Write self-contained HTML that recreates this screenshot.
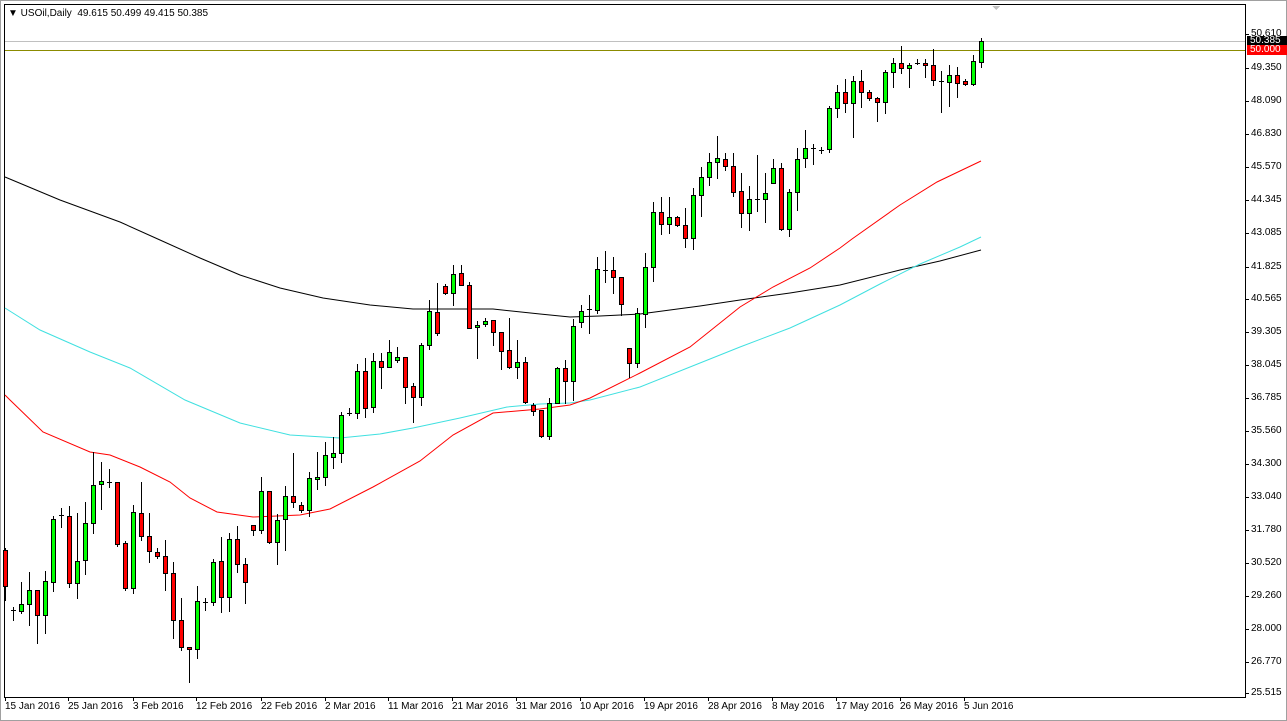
<!DOCTYPE html>
<html><head><meta charset="utf-8"><style>
html,body{margin:0;padding:0;background:#fff;}
body{width:1287px;height:721px;position:relative;overflow:hidden;font-family:"Liberation Sans",sans-serif;}
.lbl{position:absolute;font-size:10px;color:#000;white-space:nowrap;font-family:"Liberation Sans",sans-serif;}
.py{left:1251px}
.box{position:absolute;left:1247px;width:37px;height:10px;font-size:10px;line-height:10px;color:#fff;padding-left:3px;font-family:"Liberation Sans",sans-serif;}
</style></head><body>
<svg id="c" width="1287" height="721" style="position:absolute;left:0;top:0" shape-rendering="crispEdges">
<rect x="0.5" y="0.5" width="1286" height="720" fill="none" stroke="#a0a0a0"/>
<rect x="4.5" y="4.5" width="1241" height="693" fill="none" stroke="#000"/>
<line x1="5" y1="41.5" x2="1245" y2="41.5" stroke="#c0c0c0"/>
<line x1="5" y1="50.5" x2="1245" y2="50.5" stroke="#8b8b00"/>
<polygon points="992,6 1000,6 996,10" fill="#c0c0c0"/>
<g id="ma" fill="none" stroke-width="1" shape-rendering="auto">
<polyline stroke="#000" points="5,177 60,200 120,222 160,240 200,258 240,275 280,288 323,298 370,305 413,309 493,309 540,314 570,317 600,316 640,314 700,306 740,300 790,293 840,285 900,270 940,261 981,250"/>
<polyline stroke="#40e0e0" points="5,308 40,330 90,352 130,368 185,400 240,423 290,435 340,438 380,434 413,428 460,418 507,407 540,404 570,403 590,400 640,387 690,367 740,347 790,328 840,305 880,284 920,264 960,247 981,237"/>
<polyline stroke="#ff0000" points="5,395 10,400 43,432 90,452 110,455 140,467 170,482 190,498 217,512 253,517 300,515 330,509 373,487 420,461 453,435 493,413 540,409 570,405 590,398 640,373 690,347 740,307 773,287 810,268 840,248 852,239 900,205 937,182 960,171 981,161"/>
</g>
<g id="cd"></g>
<g id="tk" stroke="#000"></g>
</svg>
<div class="lbl" style="left:8px;top:8px;font-size:10px">&#9660; USOil,Daily&nbsp; 49.615 50.499 49.415 50.385</div>
<div class="lbl py" style="top:28px">50.610</div>
<div class="box" style="top:36px;background:#000">50.385</div>
<div class="box" style="top:45px;background:#ff0000">50.000</div>
<div class="lbl py" style="top:62px">49.350</div>
<div class="lbl py" style="top:95px">48.090</div>
<div class="lbl py" style="top:128px">46.830</div>
<div class="lbl py" style="top:161px">45.570</div>
<div class="lbl py" style="top:194px">44.345</div>
<div class="lbl py" style="top:227px">43.085</div>
<div class="lbl py" style="top:261px">41.825</div>
<div class="lbl py" style="top:293px">40.565</div>
<div class="lbl py" style="top:326px">39.305</div>
<div class="lbl py" style="top:359px">38.045</div>
<div class="lbl py" style="top:392px">36.785</div>
<div class="lbl py" style="top:425px">35.560</div>
<div class="lbl py" style="top:458px">34.300</div>
<div class="lbl py" style="top:491px">33.040</div>
<div class="lbl py" style="top:524px">31.780</div>
<div class="lbl py" style="top:557px">30.520</div>
<div class="lbl py" style="top:590px">29.260</div>
<div class="lbl py" style="top:623px">28.000</div>
<div class="lbl py" style="top:656px">26.770</div>
<div class="lbl py" style="top:687px">25.515</div>
<div class="lbl" style="left:5px;top:701px">15 Jan 2016</div>
<div class="lbl" style="left:68px;top:701px">25 Jan 2016</div>
<div class="lbl" style="left:133px;top:701px">3 Feb 2016</div>
<div class="lbl" style="left:196px;top:701px">12 Feb 2016</div>
<div class="lbl" style="left:261px;top:701px">22 Feb 2016</div>
<div class="lbl" style="left:325px;top:701px">2 Mar 2016</div>
<div class="lbl" style="left:388px;top:701px">11 Mar 2016</div>
<div class="lbl" style="left:452px;top:701px">21 Mar 2016</div>
<div class="lbl" style="left:516px;top:701px">31 Mar 2016</div>
<div class="lbl" style="left:580px;top:701px">10 Apr 2016</div>
<div class="lbl" style="left:644px;top:701px">19 Apr 2016</div>
<div class="lbl" style="left:708px;top:701px">28 Apr 2016</div>
<div class="lbl" style="left:772px;top:701px">8 May 2016</div>
<div class="lbl" style="left:836px;top:701px">17 May 2016</div>
<div class="lbl" style="left:900px;top:701px">26 May 2016</div>
<div class="lbl" style="left:964px;top:701px">5 Jun 2016</div>
<script>
var D=[
['r',550,586,548,600],['x',610,610,607,620],['g',604,611,582,613],['g',590,604,572,625],['r',590,615,590,643],
['g',581,615,571,633],['g',519,582,516,591],['x',515,515,508,527],['r',516,583,506,587],['g',561,583,513,598],
['g',523,560,502,574],['g',485,523,452,533],['g',481,484,462,509],['x',482,482,469,487],['r',482,544,482,546],
['r',543,588,541,590],['g',512,588,505,593],['r',513,536,482,540],['r',536,551,513,562],['r',552,556,548,558],
['r',556,573,540,590],['r',573,620,562,638],['r',620,647,598,650],['r',647,649,647,682],['g',601,649,586,658],
['x',602,602,598,610],['g',562,602,559,605],['r',561,597,537,612],['g',539,597,533,611],['r',539,564,526,572],
['r',564,582,558,603],['r',525,530,525,535],['g',491,530,477,533],['r',491,542,491,543],['g',520,542,514,564],
['g',496,519,486,550],['r',496,502,453,507],['r',505,510,502,512],['g',478,510,472,516],['g',477,479,452,489],
['g',455,477,442,485],['g',453,457,437,468],['g',415,453,412,462],['x',413,413,408,415],['g',371,413,364,418],
['r',371,408,358,417],['g',361,407,353,412],['r',361,367,353,388],['g',352,367,340,367],['g',357,360,347,362],
['r',357,387,357,403],['r',386,397,383,422],['g',345,397,343,405],['g',311,345,300,349],['r',312,333,283,335],
['r',286,293,284,294],['g',274,293,265,305],['r',273,285,265,285],['r',285,328,282,328],['g',325,327,321,358],
['g',321,324,318,326],['r',320,332,320,345],['r',332,351,332,369],['r',350,367,318,368],['g',362,367,340,378],
['r',362,402,357,403],['r',405,411,403,415],['r',410,436,410,437],['g',403,436,398,439],['g',368,403,367,403],
['r',368,381,360,403],['g',326,381,319,400],['g',311,322,305,327],['x',309,309,295,333],['g',269,310,257,313],
['x',270,270,251,282],['r',270,277,257,293],['r',277,304,277,315],['r',348,363,348,377],['g',313,363,308,367],
['g',267,314,253,327],['g',212,267,202,281],['r',212,224,197,234],['g',217,224,197,233],['r',217,225,216,226],
['r',225,238,208,247],['g',195,238,188,249],['g',177,195,167,216],['g',162,177,153,185],['g',158,162,136,178],
['r',159,166,153,170],['r',166,192,153,196],['r',191,213,173,227],['g',199,213,186,230],['x',199,199,155,211],
['g',193,199,173,222],['g',168,183,159,183],['r',168,229,163,230],['g',192,229,189,236],['g',159,192,148,210],
['g',148,158,130,167],['x',148,148,144,164],['x',150,150,147,153],['g',108,149,106,152],['g',92,108,85,117],
['r',92,103,79,112],['g',81,103,76,137],['r',81,92,70,107],['r',92,98,90,100],['r',98,102,97,121],
['g',72,102,70,113],['g',63,72,58,87],['r',63,68,46,73],['g',65,68,63,87],['x',63,63,59,64],
['r',63,65,59,77],['r',65,80,49,85],['x',81,81,71,112],['g',75,82,65,106],['r',75,83,67,97],
['r',81,84,79,85],['g',61,84,55,85],['g',41,62,38,67]];
var s='';
for(var i=0;i<D.length;i++){var d=D[i],x=5+8*i;
s+='<line x1="'+(x+0.5)+'" y1="'+d[3]+'" x2="'+(x+0.5)+'" y2="'+(d[4]+1)+'" stroke="#000"/>';
if(d[0]=='x'){s+='<line x1="'+(x-2)+'" y1="'+(d[1]+0.5)+'" x2="'+(x+3)+'" y2="'+(d[1]+0.5)+'" stroke="#000"/>';}
else{var h=Math.max(d[2]-d[1],2);s+='<rect x="'+(x-1.5)+'" y="'+(d[1]+0.5)+'" width="4" height="'+h+'" fill="'+(d[0]=='g'?'#00ff00':'#ff0000')+'" stroke="#000"/>';}}
document.getElementById('cd').innerHTML=s;
var t='';var ys=[34,68,101,134,167,200,233,267,299,332,365,398,431,464,497,530,563,596,629,662,693];
ys.forEach(function(y){t+='<line x1="1245" y1="'+(y+0.5)+'" x2="1249" y2="'+(y+0.5)+'"/>';});
[5,68,133,196,261,325,388,452,516,580,644,708,772,836,900,964].forEach(function(x){t+='<line x1="'+(x+0.5)+'" y1="697" x2="'+(x+0.5)+'" y2="701"/>';});
document.getElementById('tk').innerHTML=t;
</script>
</body></html>
